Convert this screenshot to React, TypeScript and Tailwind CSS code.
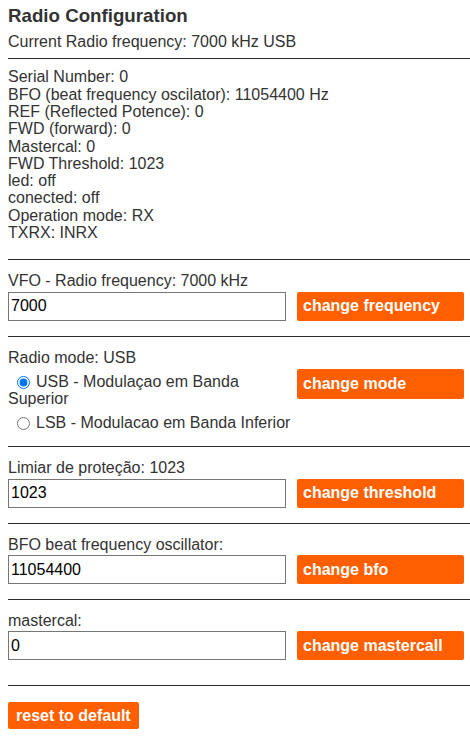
import { useState } from 'react'

const font = { fontFamily: '"Liberation Sans", Arial, Helvetica, sans-serif' }

const statusLines = [
  'Serial Number: 0',
  'BFO (beat frequency oscilator): 11054400 Hz',
  'REF (Reflected Potence): 0',
  'FWD (forward): 0',
  'Mastercal: 0',
  'FWD Threshold: 1023',
  'led: off',
  'conected: off',
  'Operation mode: RX',
  'TXRX: INRX',
]

const Rule = () => <div className="h-px w-full bg-[#2b2b2b]" />

const OrangeButton = ({ label, className = '' }: { label: string; className?: string }) => (
  <button
    type="button"
    className={`rounded-[2px] bg-[#ff5f00] px-[6px] text-left text-[16px] font-bold text-white ${className}`}
  >
    {label}
  </button>
)

const FieldSection = ({
  label,
  value,
  button,
  bottom = 'pb-[15px]',
}: {
  label: string
  value: string
  button: string
  bottom?: string
}) => {
  const [text, setText] = useState(value)
  return (
    <section className={`pt-[12px] ${bottom}`}>
      <p className="leading-[17.4px]">{label}</p>
      <div className="mt-[2px] flex items-stretch">
        <input
          className="h-[29px] w-[278px] border border-[#767676] bg-white px-[2px] text-[16px] text-black outline-none"
          style={font}
          value={text}
          onChange={(e) => setText(e.target.value)}
        />
        <OrangeButton label={button} className="ml-[11px] h-[29px] w-[167px]" />
      </div>
    </section>
  )
}

export default function App() {
  const [mode, setMode] = useState('USB')

  return (
    <div className="min-h-screen bg-white pl-2 text-[16px] text-[#333]" style={font}>
      <h3 className="pt-[5px] text-[18.72px] font-bold leading-[22px]">Radio Configuration</h3>
      <p className="mt-[6px] leading-[17.4px]">Current Radio frequency: 7000 kHz USB</p>
      <div className="mt-[8px]">
        <Rule />
      </div>

      <div className="pt-[9px] pb-[18px] leading-[17.3px]">
        {statusLines.map((line) => (
          <p key={line}>{line}</p>
        ))}
      </div>
      <Rule />

      <FieldSection label="VFO - Radio frequency: 7000 kHz" value="7000" button="change frequency" />
      <Rule />

      <section className="pt-[12px] pb-[15px]">
        <p className="leading-[17.4px]">Radio mode: USB</p>
        <div className="mt-[2px] flex items-start">
          <div className="w-[278px] pt-[5px] leading-[17px]">
            <label className="block">
              <input
                type="radio"
                name="mode"
                checked={mode === 'USB'}
                onChange={() => setMode('USB')}
                className="m-0 ml-[9px] mr-[6px] h-[13px] w-[13px] align-middle"
              />
              USB - Modulaçao em Banda
              <br />
              Superior
            </label>
            <label className="mt-[7px] block whitespace-nowrap">
              <input
                type="radio"
                name="mode"
                checked={mode === 'LSB'}
                onChange={() => setMode('LSB')}
                className="m-0 ml-[9px] mr-[6px] h-[13px] w-[13px] align-middle"
              />
              LSB - Modulacao em Banda Inferior
            </label>
          </div>
          <OrangeButton label="change mode" className="ml-[11px] mt-[1px] h-[30px] w-[167px]" />
        </div>
      </section>
      <Rule />

      <FieldSection label="Limiar de proteção: 1023" value="1023" button="change threshold" />
      <Rule />

      <FieldSection label="BFO beat frequency oscillator:" value="11054400" button="change bfo" />
      <Rule />

      <FieldSection label="mastercal:" value="0" button="change mastercall" bottom="pb-[25px]" />
      <Rule />

      <div className="pt-[16px]">
        <OrangeButton label="reset to default" className="h-[27px] px-[8px]" />
      </div>
    </div>
  )
}
